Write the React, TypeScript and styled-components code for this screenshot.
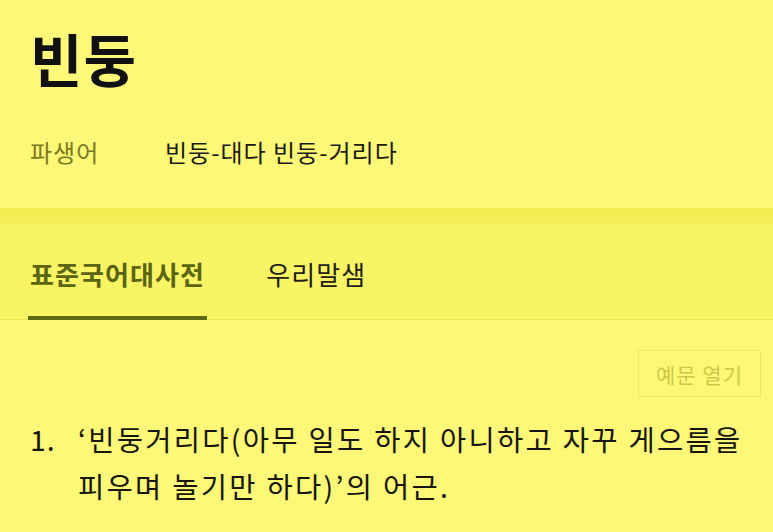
import React from "react";
import styled, { createGlobalStyle } from "styled-components";

const Global = createGlobalStyle`
  html, body { margin: 0; padding: 0; background: #fdf877; }
  body { font-family: "Noto Sans CJK KR", "Noto Sans", sans-serif; }
`;

const Page = styled.div`
  width: 773px;
  height: 532px;
  overflow: hidden;
  background: #fdf877;
  display: flex;
  flex-direction: column;
`;

const Header = styled.header`
  padding: 17px 30px 0 30px;
  height: 208px;
  box-sizing: border-box;
`;

const Title = styled.h1`
  margin: 0;
  font-size: 57px;
  font-weight: 700;
  color: #111;
  line-height: 80px;
  letter-spacing: 1px;
`;

const DerivRow = styled.div`
  display: flex;
  align-items: center;
  margin-top: 40px;
  font-size: 24px;
  line-height: 30px;
  letter-spacing: 1px;
`;

const DerivLabel = styled.span`
  width: 135px;
  color: #7b7a1c;
`;

const DerivWords = styled.span`
  color: #1a1a10;
`;

const Band = styled.div`
  height: 17px;
  background: linear-gradient(#f2ec4e, #f5f05a);
`;

const Tabs = styled.nav`
  display: flex;
  gap: 57px;
  padding: 0 30px 0 28px;
  height: 95px;
  box-sizing: border-box;
  background: #f8f464;
  border-bottom: 1px solid #ece656;
`;

const Tab = styled.div<{ $active?: boolean }>`
  display: flex;
  align-items: center;
  padding: 6px 2px 0 2px;
  font-size: 26px;
  letter-spacing: 1.1px;
  font-weight: ${(p) => (p.$active ? 700 : 400)};
  color: ${(p) => (p.$active ? "#5b6410" : "#1e1e14")};
  box-sizing: border-box;
  border-bottom: 4px solid ${(p) => (p.$active ? "#5b6a0c" : "transparent")};
  margin-bottom: -1px;
`;

const Body = styled.section`
  display: flex;
  flex-direction: column;
  padding: 30px 12px 0 30px;
`;

const ButtonRow = styled.div`
  display: flex;
  justify-content: flex-end;
`;

const ExampleButton = styled.button`
  font-family: inherit;
  background: transparent;
  border: 1.5px solid #f0e95a;
  color: #cfc84a;
  font-size: 21px;
  letter-spacing: 1px;
  height: 47px;
  width: 123px;
  padding: 0;
  cursor: pointer;
`;

const Definition = styled.ol`
  margin: 18px 0 0 0;
  padding: 0;
  list-style: none;
`;

const DefItem = styled.li`
  display: flex;
  font-size: 28.5px;
  line-height: 47px;
  letter-spacing: 2.3px;
  color: #16160c;
`;

const Num = styled.span`
  width: 48px;
  flex-shrink: 0;
  letter-spacing: 1px;
`;

const DefText = styled.span`
  word-break: keep-all;
`;

export default function App() {
  return (
    <Page>
      <Global />
      <Header>
        <Title>빈둥</Title>
        <DerivRow>
          <DerivLabel>파생어</DerivLabel>
          <DerivWords>빈둥-대다 빈둥-거리다</DerivWords>
        </DerivRow>
      </Header>
      <Band />
      <Tabs>
        <Tab $active>표준국어대사전</Tab>
        <Tab>우리말샘</Tab>
      </Tabs>
      <Body>
        <ButtonRow>
          <ExampleButton>예문 열기</ExampleButton>
        </ButtonRow>
        <Definition>
          <DefItem>
            <Num>1.</Num>
            <DefText>
              ‘빈둥거리다(아무 일도 하지 아니하고 자꾸 게으름을 피우며 놀기만 하다)’의 어근.
            </DefText>
          </DefItem>
        </Definition>
      </Body>
    </Page>
  );
}
